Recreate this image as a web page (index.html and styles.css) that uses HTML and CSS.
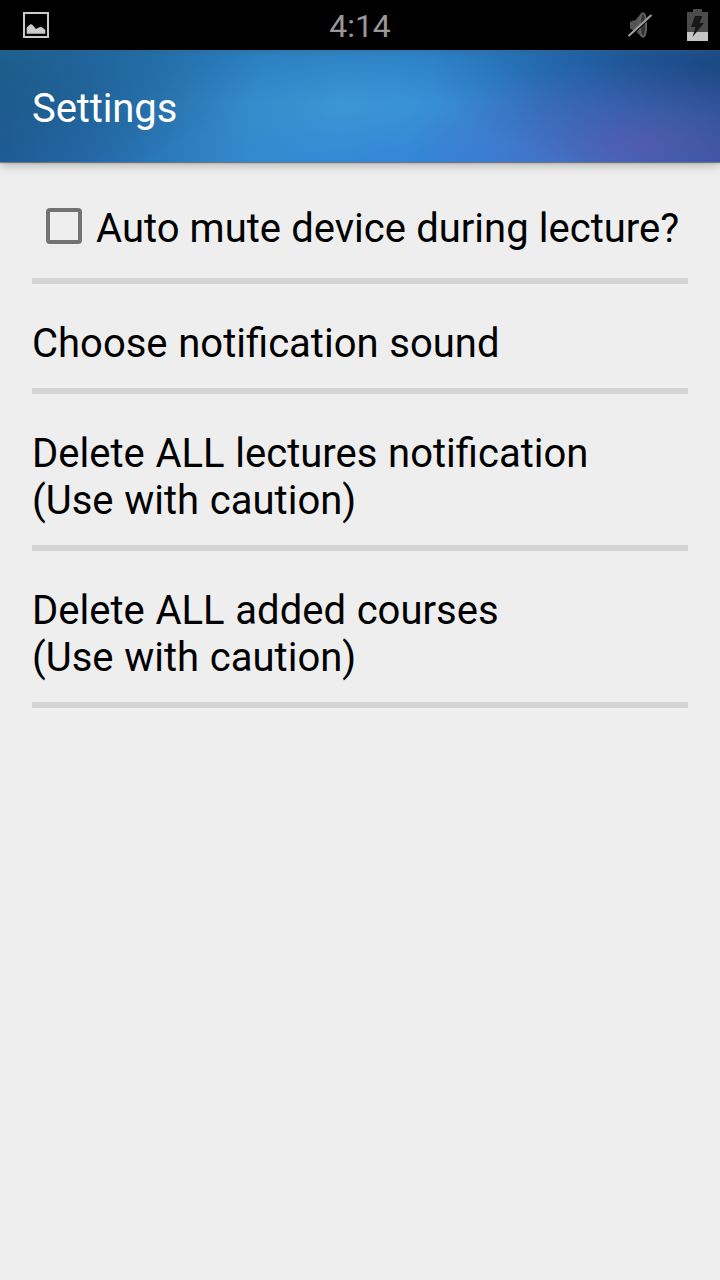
FILE: index.html
```html
<!DOCTYPE html>
<html lang="en">
<head>
<meta charset="utf-8">
<title>Settings</title>
<link rel="stylesheet" href="styles.css">
</head>
<body>
<div class="status">
  <svg class="status-picture" width="26" height="26" viewBox="0 0 26 26">
    <rect x="1" y="1" width="24" height="24" fill="none" stroke="#cbcbcb" stroke-width="2"/>
    <path d="M3.700 21.800V15.500L6.500 13Q8.200 11.300 10 13.500L12.500 16.500Q13.500 17 14.500 16.300Q17 14.300 19 15.300L22.300 18V21.800Z" fill="#cbcbcb"/>
  </svg>
  <div class="clock">4:14</div>
  <div class="status-right">
    <svg width="26" height="28" viewBox="0 0 26 28">
      <path d="M3 11L6 9.500H8L14 2.500V25.500L8 19H6L3 17.500Z" fill="#555"/>
      <ellipse cx="16" cy="14" rx="3.200" ry="11.800" fill="#333" stroke="#606060" stroke-width="1.800"/>
      <path d="M3 26L25.500 4.500" stroke="#000" stroke-width="1.500"/>
      <path d="M1.500 25L24.500 4" stroke="#9c9c9c" stroke-width="2.200"/>
    </svg>
    <svg width="21" height="32" viewBox="0 0 21 32">
      <path d="M0 3H6V0H15V3H21V23H0Z" fill="#4b4b4b"/>
      <path d="M0 23H21V32H0Z" fill="#c5c5c5"/>
      <path d="M8 7H15.500L12.500 14H17L5.500 28L8.500 18H4Z" fill="#181818"/>
    </svg>
  </div>
</div>
<header class="toolbar"><h1>Settings</h1></header>
<main class="list">
  <label class="row row-check"><span class="box"></span><span>Auto mute device during lecture?</span></label>
  <div class="row">Choose notification sound</div>
  <div class="row">Delete ALL lectures notification<br>(Use with caution)</div>
  <div class="row">Delete ALL added courses<br>(Use with caution)</div>
</main>
</body>
</html>
```
FILE: styles.css
```css
* { box-sizing: border-box; }
body {
  margin: 0;
  min-height: 1280px;
  background: #eee;
  color: #000;
  font: 40px/47px Roboto, sans-serif;
}
.status {
  display: grid;
  grid-template-columns: 1fr auto 1fr;
  align-items: center;
  height: 50px;
  padding: 0 12px 0 23px;
  background: #000;
}
.clock {
  margin-left: -11px;
  padding-top: 2px;
  color: #989898;
  font-size: 32px;
  line-height: 38px;
}
.status-right {
  display: flex;
  align-items: center;
  justify-content: flex-end;
  gap: 34px;
}
.toolbar {
  height: 112px;
  padding: 35px 32px 0;
  background:
    linear-gradient(rgba(60, 95, 115, .25), transparent 6px),
    radial-gradient(ellipse 230px 85px at 640px 95px, rgba(98, 90, 178, .7), rgba(88, 100, 190, .4) 45%, transparent),
    radial-gradient(ellipse 290px 110px at 720px 20px, rgba(25, 68, 125, .85), rgba(25, 72, 132, .4) 50%, transparent),
    radial-gradient(ellipse 240px 60px at 420px 120px, rgba(50, 127, 216, .75), transparent),
    radial-gradient(ellipse 260px 110px at 0 20px, rgba(28, 91, 129, .65), transparent),
    linear-gradient(rgba(30, 112, 180, .5), transparent 45%),
    linear-gradient(90deg, #205a96 0, #2467a8 80px, #2c7aba 170px, #358bcb 250px, #3b94d3 340px, #3a92d6 400px, #3486d2 500px, #2c6fba 600px, #284e92 720px);
  box-shadow: 0 1px 1px rgba(0, 0, 0, .4), 0 3px 10px rgba(0, 0, 0, .26);
}
h1 {
  margin: 0;
  color: #fff;
  font: inherit;
  letter-spacing: -.1px;
}
.list { padding: 0 32px; }
.row {
  padding: 36px 0 21px;
  border-bottom: 6px solid #d4d4d4;
  white-space: nowrap;
  word-spacing: .8px;
}
.row-check {
  display: flex;
  align-items: center;
  gap: 14px;
  padding: 43px 0 26px 14px;
  word-spacing: .25px;
}
.box {
  flex: none;
  width: 36px;
  height: 36px;
  margin-bottom: 5px;
  border: 4px solid #737373;
  border-radius: 4px;
}
```
